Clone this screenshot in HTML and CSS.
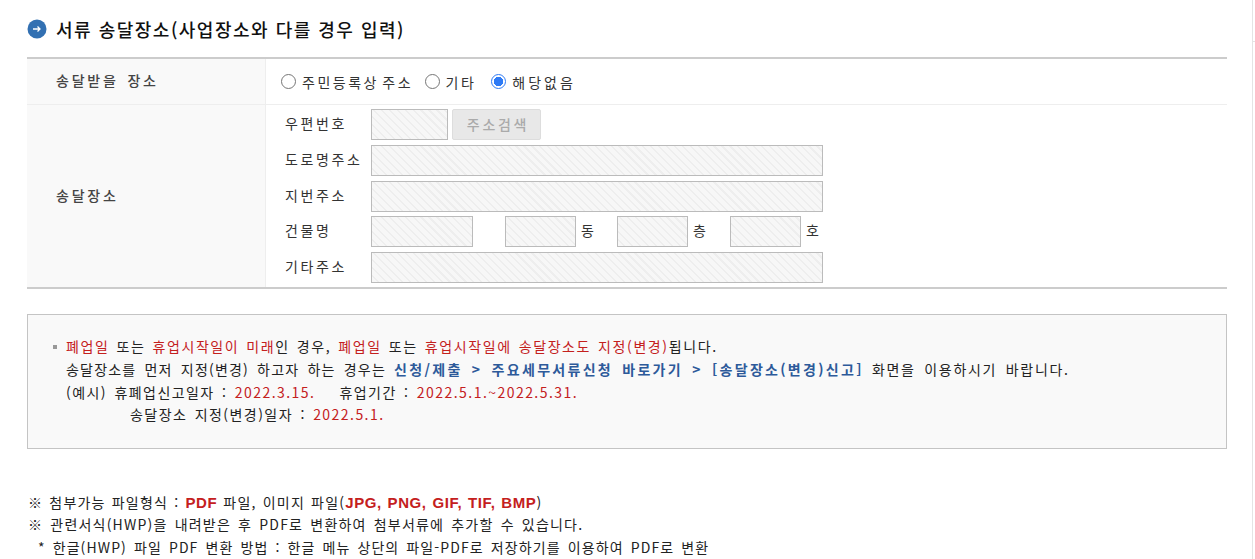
FILE: index.html
```html
<!DOCTYPE html>
<html lang="ko">
<head>
  <meta charset="UTF-8">
  <title>서류 송달장소</title>
  <link rel="stylesheet" href="styles.css">
</head>
<body>
  <div class="page">
    <h2 class="section-title">
      <svg class="title-icon" width="20" height="20" viewBox="0 0 20 20">
        <circle cx="10" cy="10" r="9.5" fill="#3270b2"/>
        <path d="M6 10h7M10.5 7.5 13 10l-2.5 2.5" fill="none" stroke="#fff" stroke-width="1.3"/>
      </svg>
      <span class="title-text">서류 송달장소(사업장소와 다를 경우 입력)</span>
    </h2>

    <div class="form-table">
      <div class="row-head row-place">송달받을 장소</div>
      <div class="row-body row-place radios">
        <span class="radio"></span><span class="radio-label">주민등록상 주소</span>
        <span class="radio"></span><span class="radio-label label-etc">기타</span>
        <span class="radio checked"></span><span class="radio-label label-none">해당없음</span>
      </div>
      <div class="row-head">송달장소</div>
      <div class="row-body address">
        <div class="addr-line">
          <span class="addr-label">우편번호</span>
          <span class="field w-zip"></span>
          <span class="btn-disabled">주소검색</span>
        </div>
        <div class="addr-line">
          <span class="addr-label">도로명주소</span>
          <span class="field w-full"></span>
        </div>
        <div class="addr-line">
          <span class="addr-label">지번주소</span>
          <span class="field w-full"></span>
        </div>
        <div class="addr-line">
          <span class="addr-label">건물명</span>
          <span class="field w-bldg"></span>
          <span class="field w-unit gap-first"></span><span class="unit">동</span>
          <span class="field w-unit"></span><span class="unit unit-wide">층</span>
          <span class="field w-unit"></span><span class="unit">호</span>
        </div>
        <div class="addr-line">
          <span class="addr-label">기타주소</span>
          <span class="field w-full"></span>
        </div>
      </div>
    </div>

    <div class="notice">
      <p class="line-first"><span class="bullet"></span><em>폐업일</em> 또는 <em>휴업시작일이 미래</em>인 경우, <em>폐업일</em> 또는 <em>휴업시작일에 송달장소도 지정(변경)</em>됩니다.</p>
      <p class="line-second">송달장소를 먼저 지정(변경) 하고자 하는 경우는 <strong>신청/제출 &gt; 주요세무서류신청 바로가기 &gt; [송달장소(변경)신고]</strong> <span class="tail">화면을 이용하시기 바랍니다.</span></p>
      <p>(예시) 휴폐업신고일자 : <em>2022.3.15.</em><span class="spacer"></span>휴업기간 : <em>2022.5.1.~2022.5.31.</em></p>
      <p class="indent">송달장소 지정(변경)일자 : <em>2022.5.1.</em></p>
    </div>

    <div class="file-notes">
      <p class="line-types">※ 첨부가능 파일형식 : <b>PDF</b> 파일, 이미지 파일(<b>JPG, PNG, GIF, TIF, BMP</b>)</p>
      <p>※ 관련서식(HWP)을 내려받은 후 PDF로 변환하여 첨부서류에 추가할 수 있습니다.</p>
      <p class="sub">* 한글(HWP) 파일 PDF 변환 방법 : 한글 메뉴 상단의 파일-PDF로 저장하기를 이용하여 PDF로 변환</p>
    </div>
  </div>
  <div class="edge-line"></div>
</body>
</html>
```
FILE: styles.css
```css
html, body {
  margin: 0;
  padding: 0;
  height: 559px;
  overflow: hidden;
  background: #fff;
}

body {
  font-family: "Noto Sans CJK KR", "Liberation Sans", sans-serif;
  font-size: 14px;
  color: #333;
  display: flex;
}

.page {
  width: 1200px;
  margin-left: 27px;
  padding-top: 17px;
}

/* 제목 */
.section-title {
  display: flex;
  align-items: center;
  gap: 9px;
  height: 24px;
  margin: 0 0 16px;
  font-size: 18px;
  font-weight: 500;
  letter-spacing: 1.5px;
  color: #111;
}

.title-text {
  padding-bottom: 1px;
}

/* 입력 표 */
.form-table {
  display: grid;
  grid-template-columns: 239px 1fr;
  border-top: 2px solid #ccc;
  border-bottom: 2px solid #ccc;
}

.row-head {
  display: flex;
  align-items: center;
  padding: 0 0 2px 29px;
  background: #f9f9f9;
  border-right: 1px solid #eee;
  letter-spacing: 2.8px;
  word-spacing: 2px;
  font-weight: 500;
  color: #444;
}

.row-place {
  height: 45px;
  border-bottom: 1px solid #eee;
}

.row-head.row-place {
  height: 41px;
  padding-bottom: 4px;
}

.radios {
  display: flex;
  align-items: center;
  padding-left: 15px;
  letter-spacing: 2.5px;
  word-spacing: -3px;
}

.radio {
  width: 13px;
  height: 13px;
  border: 1px solid #767676;
  border-radius: 50%;
  margin-right: 6px;
}

.radio.checked {
  border: 1px solid #2f7bf5;
  background: radial-gradient(circle, #2f7bf5 0 4.5px, #fff 5px);
}

.radio-label {
  margin-right: 11.5px;
}

.label-etc {
  margin-right: 15px;
}

.label-none {
  letter-spacing: 3px;
}

.address {
  padding: 4px 0 4px 19px;
}

.addr-line {
  display: flex;
  align-items: center;
  height: 31px;
  margin-bottom: 4.75px;
}

.addr-line:last-child {
  margin-bottom: 0;
}

.addr-label {
  width: 86px;
  padding-bottom: 3px;
  letter-spacing: 2.6px;
}

.field {
  box-sizing: border-box;
  height: 31px;
  border: 1px solid #bbb;
  background: repeating-linear-gradient(45deg, #f7f7f7 0 4px, #eee 4px 5.6px);
}

.w-zip { width: 77px; }
.w-full { width: 452px; }
.w-bldg { width: 102px; }
.w-unit { width: 71px; }
.gap-first { margin-left: 32px; }

.unit {
  width: 41px;
  padding: 0 0 3px 5px;
  box-sizing: border-box;
}

.unit-wide {
  width: 42px;
}

.addr-line .unit:last-child {
  width: auto;
}

.btn-disabled {
  box-sizing: border-box;
  width: 89px;
  height: 31px;
  margin-left: 4px;
  padding: 0 0 2px 3px;
  display: flex;
  align-items: center;
  justify-content: center;
  background: #e8e8e8;
  border: 1px solid #ddd;
  border-radius: 2px;
  color: #aaa;
  font-weight: 500;
  letter-spacing: 2.7px;
}

/* 안내 상자 */
.notice {
  box-sizing: border-box;
  height: 135px;
  margin-top: 25px;
  padding: 20px 24px 0 38px;
  background: #f9f9f9;
  border: 1px solid #c4c4c4;
  letter-spacing: 1.45px;
  word-spacing: 2px;
  color: #222;
}

.notice p {
  margin: 0;
  height: 22.8px;
  line-height: 22.8px;
  white-space: nowrap;
}

.notice .line-first {
  letter-spacing: 1.6px;
  word-spacing: 1.5px;
}

.notice .line-second {
  letter-spacing: 1.2px;
  word-spacing: 3px;
}

.notice em {
  font-style: normal;
  color: #c4201d;
}

.notice strong {
  color: #2d5a9a;
  font-weight: 700;
  letter-spacing: 2.3px;
  word-spacing: 3px;
}

.notice .tail {
  letter-spacing: 1.7px;
}

.notice .indent {
  padding-left: 64px;
}

.bullet {
  display: inline-block;
  width: 4px;
  height: 4px;
  background: #999;
  margin: 0 9px 3px -13px;
}

.spacer {
  display: inline-block;
  width: 24px;
}

/* 첨부 안내 */
.file-notes {
  margin-top: 42px;
  padding-left: 1px;
  letter-spacing: 1.2px;
  word-spacing: 2px;
  color: #222;
}

.file-notes p {
  margin: 0;
  height: 22.4px;
  line-height: 22.4px;
  white-space: nowrap;
}

.file-notes .line-types {
  word-spacing: 1px;
}

.file-notes b {
  font-family: "Liberation Sans", sans-serif;
  font-size: 15px;
  letter-spacing: 0.6px;
  color: #c4201d;
}

.file-notes .sub {
  padding-left: 10px;
  letter-spacing: 1.1px;
}

/* 오른쪽 끝 선 */
.edge-line {
  width: 3px;
  height: 559px;
  margin-left: 25px;
  background:
    linear-gradient(#e4e4e4, #e4e4e4) left top / 1px 100% no-repeat,
    linear-gradient(#e4e4e4, #e4e4e4) left 41px / 3px 1px no-repeat;
}
```
